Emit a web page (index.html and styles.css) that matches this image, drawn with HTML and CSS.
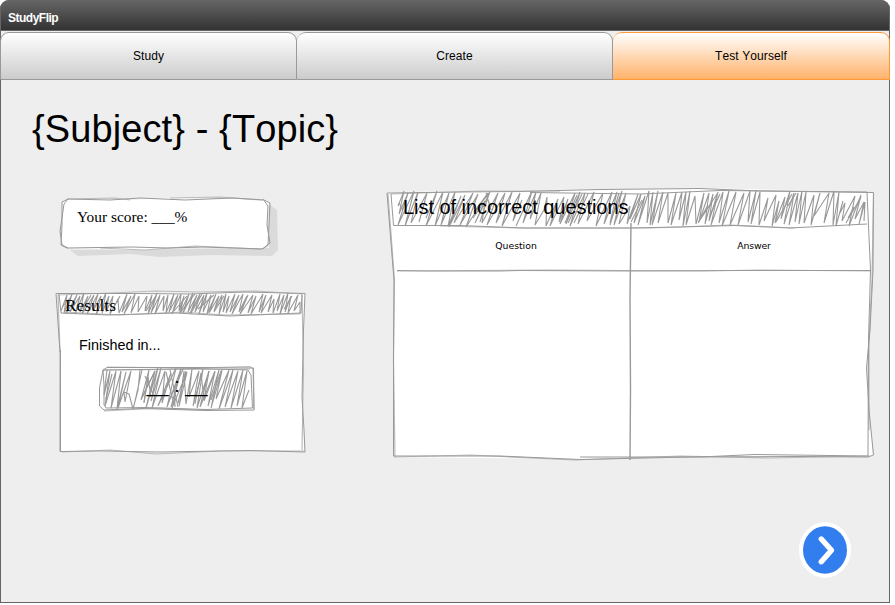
FILE: index.html
```html
<!DOCTYPE html>
<html lang="en">
<head>
<meta charset="utf-8">
<title>StudyFlip</title>
<link rel="stylesheet" href="styles.css">
</head>
<body>
<div class="window">
  <header class="titlebar">StudyFlip</header>
  <nav class="tabs">
    <a class="tab">Study</a>
    <a class="tab">Create</a>
    <a class="tab active">Test Yourself</a>
  </nav>
  <main class="content">
    <h1 class="title">{Subject} - {Topic}</h1>
    <div class="columns">
      <div class="side">
        <section class="score">
          <svg class="sketch" viewBox="55 190 230 72" width="230" height="72">
            <path class="shadow" d="M70 250L78 256 130 254 160 257 210 255 272 256 278 250 277 210 269 204V248Z"/>
            <path class="paper" d="M62 202L69 198 130 200 165 198 220 199 264 199 269 203 267 225 269 244 262 249 195 247 140 250 67 248 61 243 62 225Z"/>
            <path class="line soft" d="M67 199L115 198 130 200M170 198L220 197 262 200M100 248L145 250 195 246 262 249"/>
            <path class="line" d="M62 202L68 199 110 200 140 198 185 200 232 198 264 200 270 203 269 225 268 245 262 249 203 247 168 248 132 247 67 248 61 245 62 225ZM68 199L64 204 60 231 62 245 68 248M263 199L268 206 267 225 270 243 263 249"/>
          </svg>
          <p class="score-text">Your score: ___%</p>
        </section>
        <section class="results">
          <svg class="sketch" viewBox="50 285 260 172" width="260" height="172">
            <path class="paper" d="M56 293L305 293 303 350 304 452 60 452 59 340Z"/>
            <path class="line soft" d="M58 295L110 293 155 291 200 292 256 291 302 294M58 295L60 352M64 312L120 315 182 312 225 315 300 314M302 294L303.500 370 302 450M62 452L110 450 156 454 220 451 304 451"/>
            <path class="line" d="M56 293.500L135 293.500 190 294 245 292 305 293.500 303.500 330 302 397 304 430 305 452 250 450.500 160 452 100 451 60 451.500 60 352ZM59 294L61 313 108 315 176 313 230 316 301 313 302 295M60.500 350V451"/>
            <path class="line hatch" d="M61 311L67 295 64 313 72 294 66 314 77 295 70 312 80 296 75 314 84 293 80 312 88 296 82 314 94 295 87 314 98 294 93 311 101 296 96 315 106 293 102 313 109 296 106 312 113 296 110 314 120 296 113 309 118 299 119 313 127 294 122 312 131 296 124 314 135 294 131 313 139 296 138 312 147 296 145 311 152 295 148 314 157 293 151 313 160 295 155 314 164 296 163 311 168 295 166 313 174 294 169 312 178 295 172 314 181 294 179 311 184 296 180 313 189 294 183 313 193 293 188 312 197 295 190 314 200 294 195 312 204 295 199 314 207 293 203 312 211 295 207 314 216 294 209 313 219 296 214 311 222 295 219 314 226 294 223 312 229 296 226 313 235 294 230 312 239 295 232 314 243 294 239 312 248 295 240 314 253 295 248 313 256 296 251 314 263 294 259 312 266 295 261 313 272 295 268 312 274 299 273 313 280 294 277 311 284 295 280 314 288 293 285 312 291 296 288 313 298 295 294 311 300 302 300 314"/>
            <path class="line hatch" d="M62 307L70 298M83 309L91 295M146 311L156 296M174 311L187 296M180 313L195 294M191 313L202 294M198 309L214 295M214 312L224 296M240 310L247 296M284 309L292 296"/>
            <path class="line soft" d="M107 367L196 368 250 366.500 253 369 254 409M204 410L160 408 104 411M104 370L250 369"/>
            <path class="line" d="M103 370L142 369.500 196 368.500 248 370 251 375 252.500 408 206 409.500 145 407.500 106 408 104 405 104 385ZM103 370L107 367.500 196 367.500 253.500 368 254 410 206 410.500 142 408.500 104 410 99.500 406 99.500 388Z"/>
            <path class="line hatch" d="M107 370L104 395 110 371 105 406 116 371 111 408 121 371 117 409 126 372 118 408 131 371 125 402 124 392 129 394 133 409 138 390 140 370M135 401L142 370M144 403L149 370 141 400 155 371 146 408 158 367 151 401 161 368 152 408 165 371 162 403 171 373 158 406 176 368 167 407 181 369 172 408 187 372 179 406 184 371 186 404 192 369 189 397 199 371 193 406 203 369 197 408 209 371 200 407 215 371 208 406 219 370 211 408 222 370 216 399 229 370 219 409 233 370 225 407 238 371 231 408 243 370 237 406 247 371 242 408 249 390"/>
            <path class="line hatch" d="M106 399L112 374M144 402L148 377 151 397M145 376L153 394M143 395L155 371M166 372L174 405M170 370L178 407M168 403L184 367M171 407L181 369M174 388L175 407M178 403L186 371M195 404L201 373 204 400 209 371M204 401L215 372M211 400L221 371"/>
          </svg>
          <h2 class="results-title">Results</h2>
          <p class="finished">Finished in...</p>
          <p class="timer">__ : __</p>
        </section>
      </div>
      <section class="incorrect">
        <svg class="sketch" viewBox="380 183 500 280" width="500" height="280">
          <path class="paper" d="M387 192L700 188 874 192 873 270 867 368 869 410 873 456 690 458 580 459 394 457 394 280Z"/>
          <path class="line soft" d="M391 194L480 191 560 191M388 194L394.500 280 393.500 360 395 457M873.500 193L872 280 869 340 869 430M394 457L470 455 575 460 680 456 770 458 870 456M397 271L550 270 700 271 760 270 870 271M440 226L520 228 650 228 730 225 795 228"/>
          <path class="line" d="M387 193L460 192 520 191.500 600 189.500 700 188.500 760 191 873.500 192.500 873 270 870 330 866.500 368 869 410 873.500 455 868 457 800 456.500 690 457 580 459.500 500 456 393.500 456 393.500 350 394 280ZM391 194L393.500 225.500 460 225.500 525 228 630 228 680 227 735 225.500 790 228 867 224M530 192.500L640 194 720 190.500 867 192 870.500 270 868.500 340 868 456M397 270.500L425 271 500 271 520 270.500 630 271 740 270.500 870 270.500M580 457L700 457 755 454.500 868 456"/>
          <path class="line rule" d="M631 223L630 300 630.500 390 630 460"/>
          <path class="line hatch" d="M398 206L404 191 399 214 408 193 398 225 414 191 405 226 418 192 411 223 427 193 419 222 425 201M426 218L437 191 426 226 443 192 435 226 449 193 441 225 455 192 448 226 461 196 449 227 465 195 454 223 473 193 460 225 478 194 466 227 488 193 474 212 490 192 475 223 485 201 482 223 498 193 487 225 505 193 496 223 512 192 502 226 520 193 513 221 522 200M516 226L532 191 523 223 536 192 530 219 541 193 535 225 544 210 547 197 546 226 558 199 550 226 564 197 559 222 568 199 560 224 575 193 566 224 580 192 570 226 585 193 578 224 594 192 587 221 603 193 596 226 612 192 604 224 617 192 610 223 622 191 614 225 626 193 619 224 630 206 627 224 638 194 630 219 641 194 634 223 645 196 638 225 649 191 647 223 653 192 650 225 658 191 652 225 663 192 658 223 668 193 668 223 676 193 671 225 682 192 679 220 686 192 683 226 690 191 686 225 695 196 696 224 704 193 699 222 709 193 705 224 713 194 709 221 718 192 711 225 723 192 719 223 729 191 722 226 736 192 730 225 744 193 738 225 750 191 748 222 756 191 751 224 760 192 759 225 768 198 764 221 776 195 772 226 779 201 775 223 785 197 781 219 790 191 784 224 794 193 789 225 798 193 795 222 802 191 799 224 806 192 804 223 814 195 811 225 820 193 814 216 829 193 824 223 834 191 833 225 839 192 836 226 843 201M840 213L845 203 842 221 855 196 849 226 861 195 855 219 864 202 859 224 865 202 864 221"/>
          <path class="line hatch" d="M399 203L403 210M480 222L489 194M486 193L491 210M473 218L485 201M565 223L577 195M568 223L582 194M574 223L588 194M610 225L619 193M631 222L642 200M700 220L717 194M698 223L708 205M711 213L720 194M776 222L792 194M788 206L796 193M846 223L861 197M848 218L854 207"/>
        </svg>
        <h2 class="list-title">List of incorrect questions</h2>
        <div class="table-head"><span>Question</span><span class="answer">Answer</span></div>
      </section>
    </div>
    <button class="next" aria-label="Next">
      <svg viewBox="798 521 54 58" width="54" height="58">
        <ellipse class="ring" cx="825" cy="550" rx="26" ry="28"/>
        <ellipse class="disc" cx="825" cy="550" rx="22" ry="23.8"/>
        <path class="chevron" d="M821.300 539L831.500 550.200 821.300 561.700"/>
      </svg>
    </button>
  </main>
</div>
</body>
</html>
```
FILE: styles.css
```css
* { box-sizing: border-box; }
body {
  margin: 0;
  background: #fff;
  color: #000;
  font-family: "Liberation Sans", sans-serif;
  font-kerning: none;
}
h1, h2, p { margin: 0; font-weight: normal; white-space: nowrap; }
.window {
  width: 890px;
  height: 603px;
  display: flex;
  flex-direction: column;
  background: #eee;
  border-radius: 9px 9px 0 0;
  box-shadow: inset 0 0 0 1px #666;
}
.titlebar {
  height: 31px;
  padding: 4px 7px 0;
  border: 1px solid #666;
  border-top: 0;
  border-radius: 9px 9px 0 0;
  background: linear-gradient(#666, #333);
  color: #fff;
  font-size: 12px;
  font-weight: bold;
  line-height: 28px;
  letter-spacing: -0.5px;
}
.tabs {
  display: grid;
  grid-template-columns: 297px 316px 277px;
  height: 48px;
  margin-top: 1px;
}
.tab {
  border: 1px solid #999;
  border-left-width: 0;
  border-radius: 9px 9px 0 0;
  background: linear-gradient(#fff, #ccc);
  font-size: 12px;
  line-height: 46px;
  letter-spacing: 0.1px;
  text-align: center;
}
.tab:first-child { border-left-width: 1px; }
.tab.active {
  border-color: #ff9933;
  background: linear-gradient(#fff, #ffb26b);
}
.content {
  flex: 1;
  display: flex;
  flex-direction: column;
  padding: 26px 38px 24px 32px;
}
.title { font-size: 38px; line-height: 46px; letter-spacing: 0.1px; }
.columns {
  display: grid;
  grid-template-columns: 355px 480px;
  margin-top: 40px;
}
.side { padding: 6px 0 0 28px; }
.sketch { position: absolute; z-index: -1; overflow: visible; }
.score, .results, .incorrect { position: relative; z-index: 0; }
.score {
  width: 209px;
  height: 51px;
  padding: 10px 0 0 17px;
}
.score .sketch { left: -5px; top: -8px; }
.score-text {
  font: 15.4px/18px "Liberation Serif", serif;
}
.results {
  width: 245px;
  height: 160px;
  margin-top: 43px;
  padding: 4px 0 0 5px;
}
.results .sketch { left: -10px; top: -7px; }
.results-title { font: 17.3px/20px "Liberation Serif", serif; }
.finished {
  margin: 19px 0 0 14px;
  font-size: 14.4px;
  line-height: 20px;
}
.timer {
  width: 154px;
  margin: 18px 0 0 35px;
  font-size: 20px;
  line-height: 24px;
  text-align: center;
}
.incorrect { height: 268px; padding-top: 3px; }
.incorrect .sketch { left: -7px; top: -9px; }
.list-title {
  padding-left: 16px;
  font-size: 20px;
  line-height: 24px;
  letter-spacing: -0.05px;
}
.table-head {
  display: grid;
  grid-template-columns: 242px 234px;
  padding-left: 8px;
  margin-top: 17px;
  font: 9.3px/20px "DejaVu Sans", sans-serif;
  text-align: center;
}
.answer { letter-spacing: -0.1px; }
.next {
  margin: auto 0 0 auto;
  padding: 0;
  border: 0;
  background: none;
  display: flex;
}
.paper, .ring { fill: #fff; }
.shadow { fill: #dadada; }
.line {
  fill: none;
  stroke: #999;
  stroke-width: 1;
}
.soft { stroke: #bbb; stroke-width: 1.2; }
.rule { stroke-width: 1.4; }
.hatch { stroke-width: 1.1; stroke-linejoin: bevel; }
.disc { fill: #337eee; }
.chevron {
  fill: none;
  stroke: #fff;
  stroke-width: 5.4;
  stroke-linecap: round;
  stroke-linejoin: round;
}
```
